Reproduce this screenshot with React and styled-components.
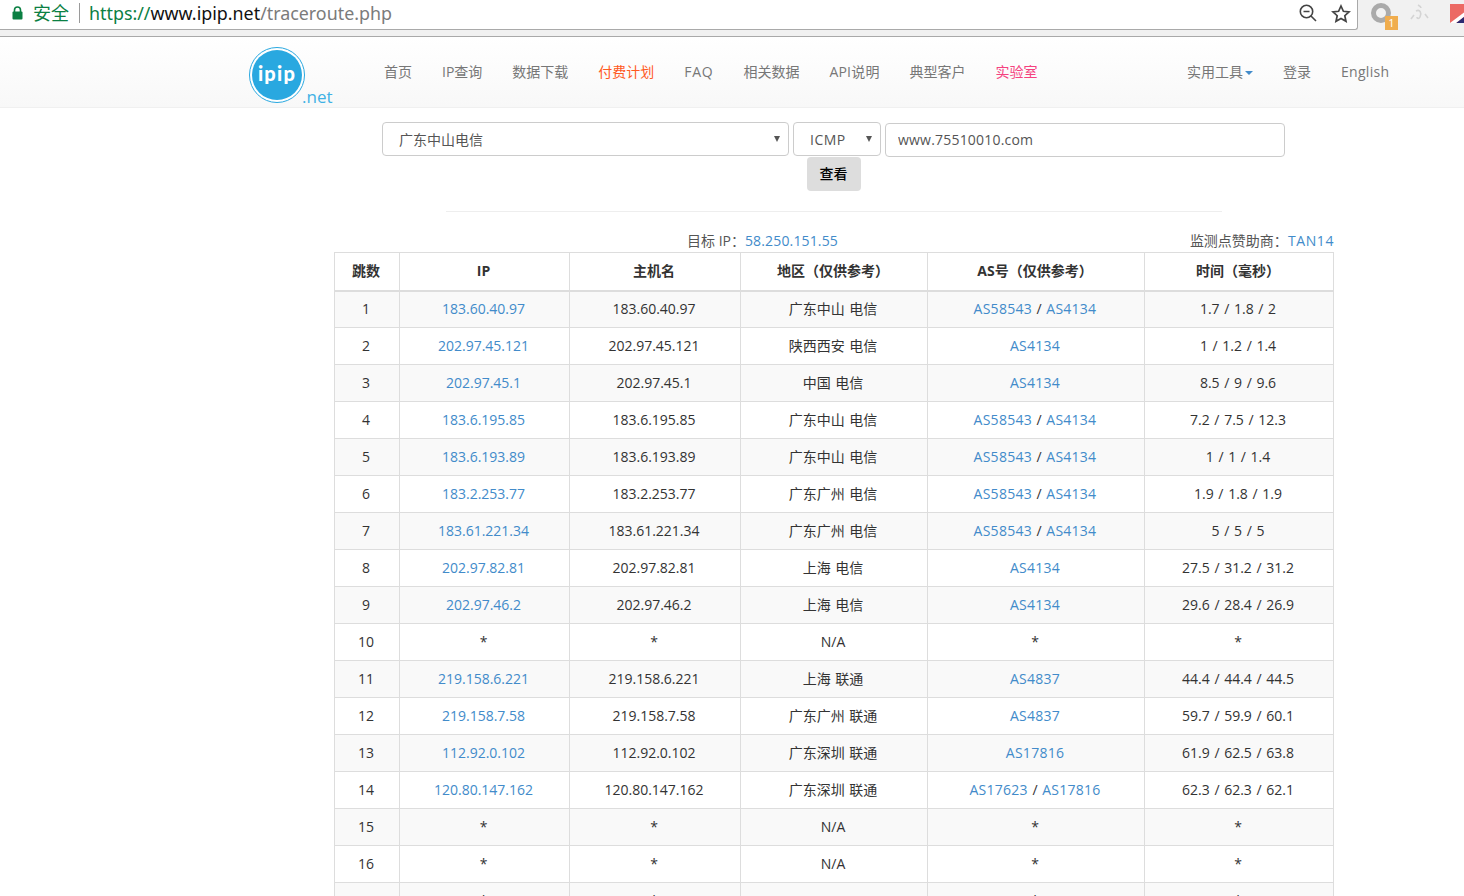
import React from "react";
import styled, { createGlobalStyle } from "styled-components";

const GlobalStyle = createGlobalStyle`
    html, body {
        margin: 0;
        padding: 0;
        height: 896px;
        overflow: hidden;
        background: #fff;
    }
    body {
        font-family: "Open Sans", "Noto Sans CJK SC", sans-serif;
        font-size: 14px;
        color: #333;
    }
`;

const Browser = styled.div`
    height: 36px;
    background: #f1f1f1;
    border-bottom: 1px solid #a9a9a9;
    display: flex;
    align-items: flex-start;
    box-sizing: content-box;
`;

const AddressBar = styled.div`
    width: 1358px;
    height: 30px;
    box-sizing: border-box;
    background: #fff;
    border-right: 1px solid #a9a9a9;
    border-bottom: 1px solid #a9a9a9;
    border-bottom-right-radius: 3px;
    display: flex;
    align-items: center;
    padding: 0 6px 3px 12px;
`;

const Secure = styled.span`
    color: #0b8043;
    font-size: 18px;
    margin-left: 10px;
    padding-right: 10px;
    border-right: 1px solid #9a9a9a;
    line-height: 20px;
`;

const Url = styled.div`
    margin-left: 9px;
    flex: 1;
    font-family: "Noto Sans", sans-serif;
    font-size: 17.85px;
    color: #7b7b7b;
    white-space: nowrap;
`;

const UrlScheme = styled.span`
    color: #0b8043;
`;

const UrlHost = styled.span`
    color: #111;
`;

const ChromeIcons = styled.div`
    display: flex;
    align-items: center;
    gap: 14px;
`;

const Extensions = styled.div`
    flex: 1;
    height: 30px;
    display: flex;
    align-items: flex-start;
    padding: 2px 0 0 12px;
    gap: 13px;
    overflow: hidden;
`;

const ExtIcon = styled.div`
    position: relative;
    width: 27px;
    height: 30px;
    flex: none;
`;

const Badge = styled.span`
    position: absolute;
    left: 15px;
    top: 14px;
    width: 13px;
    height: 14px;
    background: #f0ad4e;
    color: #fff;
    font-size: 11px;
    line-height: 14px;
    text-align: center;
`;

const Navbar = styled.nav`
    height: 71px;
    box-sizing: border-box;
    background: linear-gradient(to bottom, #fff 0%, #f8f8f8 100%);
    border-bottom: 1px solid #f0f0f0;
    display: flex;
    padding-left: 249px;
`;

const Logo = styled.a`
    width: 85px;
    height: 70px;
    flex: none;
`;

const NavList = styled.div`
    display: flex;
    align-items: center;
    margin-left: 50px;
    gap: 30px;
    height: 68px;
`;

const NavRight = styled(NavList)`
    margin-left: 0;
    position: absolute;
    left: 1187px;
`;

const NavItem = styled.a`
    color: ${(p) => p.$color || "#777"};
    font-size: 14px;
    letter-spacing: ${(p) => p.$spacing || 0}px;
    white-space: nowrap;
`;

const Caret = styled.span`
    display: inline-block;
    margin-left: 2px;
    vertical-align: middle;
    border-top: 4px solid #428bca;
    border-left: 4px solid transparent;
    border-right: 4px solid transparent;
`;

const Form = styled.form`
    display: flex;
    flex-direction: column;
    align-items: flex-start;
    padding: 14px 0 0 382px;
`;

const FieldRow = styled.div`
    display: flex;
    gap: 4px;
`;

const SelectWrap = styled.div`
    position: relative;
    width: ${(p) => p.$width}px;
    &::after {
        content: "";
        position: absolute;
        right: 9px;
        top: 14px;
        border-top: 6px solid #555;
        border-left: 3.5px solid transparent;
        border-right: 3.5px solid transparent;
    }
`;

const Select = styled.select`
    appearance: none;
    width: 100%;
    height: 34px;
    box-sizing: border-box;
    padding: 0 16px;
    background: #fff;
    border: 1px solid #ccc;
    border-radius: 4px;
    font: inherit;
    font-size: 14px;
    letter-spacing: ${(p) => p.$spacing || 0}px;
    color: #555;
`;

const Input = styled.input`
    width: 400px;
    height: 34px;
    margin-top: 1px;
    box-sizing: border-box;
    padding: 0 12px 2px;
    background: #fff;
    border: 1px solid #ccc;
    border-radius: 4px;
    font: inherit;
    font-size: 14px;
    letter-spacing: 0.2px;
    color: #555;
`;

const Submit = styled.button`
    width: 54px;
    height: 34px;
    margin: 0 0 0 425px;
    background: #ddd;
    border: 0;
    border-radius: 4px;
    font: inherit;
    font-size: 14px;
    font-weight: 500;
    color: #000;
    padding: 0 1px 3px 0;
`;

const Divider = styled.hr`
    width: 776px;
    margin: 20px 0 0 446px;
    border: 0;
    border-top: 1px solid #eee;
`;

const Content = styled.div`
    width: 1000px;
    margin: 20px 0 0 334px;
`;

const InfoRow = styled.div`
    display: flex;
    justify-content: space-between;
    height: 20px;
    padding-left: 353px;
    box-sizing: border-box;
    line-height: 18px;
    color: #555;
`;

const Link = styled.a`
    color: ${(p) => p.$color || "#428bca"};
    letter-spacing: ${(p) => p.$spacing || 0}px;
`;

const Table = styled.table`
    width: 999px;
    table-layout: fixed;
    border-collapse: collapse;
    border: 1px solid #ddd;
`;

const Th = styled.th`
    height: 38px;
    box-sizing: border-box;
    padding: 0 9px 2px 7px;
    border: 1px solid #ddd;
    border-bottom: 2px solid #ddd;
    text-align: center;
    font-size: 14px;
    font-weight: 700;
    color: #333;
`;

const Tr = styled.tr`
    background: ${(p) => (p.$odd ? "#f9f9f9" : "#fff")};
`;

const Td = styled.td`
    height: 37px;
    box-sizing: border-box;
    padding: 0 9px 2px 7px;
    border: 1px solid #ddd;
    text-align: center;
    font-size: 14px;
    word-spacing: 1px;
    color: #333;
`;

const columns = [
    { title: "跳数", width: 65 },
    { title: "IP", width: 170 },
    { title: "主机名", width: 171 },
    { title: "地区（仅供参考）", width: 187 },
    { title: "AS号（仅供参考）", width: 217 },
    { title: "时间（毫秒）", width: 189 },
];

const navItems = [
    { label: "首页" },
    { label: "IP查询" },
    { label: "数据下载" },
    { label: "付费计划", color: "#ff5a1f" },
    { label: "FAQ", spacing: 0.7 },
    { label: "相关数据" },
    { label: "API说明", spacing: 0.2 },
    { label: "典型客户" },
    { label: "实验室", color: "#f5427f" },
];

const hops = [
    ["183.60.40.97", "广东中山 电信", ["AS58543", "AS4134"], "1.7 / 1.8 / 2"],
    ["202.97.45.121", "陕西西安 电信", ["AS4134"], "1 / 1.2 / 1.4"],
    ["202.97.45.1", "中国 电信", ["AS4134"], "8.5 / 9 / 9.6"],
    ["183.6.195.85", "广东中山 电信", ["AS58543", "AS4134"], "7.2 / 7.5 / 12.3"],
    ["183.6.193.89", "广东中山 电信", ["AS58543", "AS4134"], "1 / 1 / 1.4"],
    ["183.2.253.77", "广东广州 电信", ["AS58543", "AS4134"], "1.9 / 1.8 / 1.9"],
    ["183.61.221.34", "广东广州 电信", ["AS58543", "AS4134"], "5 / 5 / 5"],
    ["202.97.82.81", "上海 电信", ["AS4134"], "27.5 / 31.2 / 31.2"],
    ["202.97.46.2", "上海 电信", ["AS4134"], "29.6 / 28.4 / 26.9"],
    null,
    ["219.158.6.221", "上海 联通", ["AS4837"], "44.4 / 44.4 / 44.5"],
    ["219.158.7.58", "广东广州 联通", ["AS4837"], "59.7 / 59.9 / 60.1"],
    ["112.92.0.102", "广东深圳 联通", ["AS17816"], "61.9 / 62.5 / 63.8"],
    ["120.80.147.162", "广东深圳 联通", ["AS17623", "AS17816"], "62.3 / 62.3 / 62.1"],
    null,
    null,
    null,
];

const App = () => {
    return (
        <>
            <GlobalStyle />
            <Browser>
                <AddressBar>
                    <svg width="11" height="14" viewBox="0 0 11 14">
                        <path d="M2.5 6V4a3 3 0 0 1 6 0v2" fill="none" stroke="#0b8043" strokeWidth="1.6" />
                        <rect x="0.5" y="5.5" width="10" height="8" rx="1" fill="#0b8043" />
                    </svg>
                    <Secure>安全</Secure>
                    <Url>
                        <UrlScheme>https://</UrlScheme>
                        <UrlHost>www.ipip.net</UrlHost>
                        /traceroute.php
                    </Url>
                    <ChromeIcons>
                        <svg width="18" height="18" viewBox="0 0 18 18" fill="none" stroke="#444" strokeWidth="1.6">
                            <circle cx="7.5" cy="7.5" r="6.2" />
                            <path d="M4.5 7.5h6M12 12l5 5" />
                        </svg>
                        <svg width="20" height="19" viewBox="0 0 20 19" fill="none" stroke="#444" strokeWidth="1.7">
                            <path d="M10 2l2.4 5.3 5.6.6-4.2 3.8 1.2 5.6-5-2.9-5 2.9 1.2-5.6L2 7.9l5.6-.6z" />
                        </svg>
                    </ChromeIcons>
                </AddressBar>
                <Extensions>
                    <ExtIcon>
                        <svg width="24" height="24" viewBox="0 0 24 24" fill="none" stroke="#aaa" strokeWidth="5">
                            <circle cx="11" cy="11" r="7.5" />
                        </svg>
                        <Badge>1</Badge>
                    </ExtIcon>
                    <ExtIcon>
                        <svg width="20" height="22" viewBox="0 0 20 22" fill="none" stroke="#d4d4d4" strokeWidth="1.6">
                            <path d="M8 3c2 1 3 2 3 3M6 9c4-2 6 2 4 6-1 2-3 2-3 0M4 13l-3 4M15 12l3 4" />
                        </svg>
                    </ExtIcon>
                    <ExtIcon>
                        <svg width="20" height="24" viewBox="0 0 20 24">
                            <rect y="2" width="20" height="19" fill="#ec6a64" />
                            <path d="M6 21L20 10v11z" fill="#2b2a72" />
                            <path d="M0 21L20 6v4L6 21z" fill="#fff" />
                        </svg>
                    </ExtIcon>
                </Extensions>
            </Browser>

            <Navbar>
                <Logo>
                    <svg width="85" height="70" viewBox="0 0 85 70">
                        <circle cx="28" cy="38" r="27.5" fill="#fff" stroke="#29a8e0" strokeWidth="1" />
                        <circle cx="28" cy="38" r="25" fill="#29a8e0" />
                        <text x="28" y="44" textAnchor="middle" fontFamily="Lato, sans-serif" fontWeight="900" fontSize="20" letterSpacing="1.2" fill="#fff">ipip</text>
                        <text x="53" y="66" fontFamily="'Open Sans', sans-serif" fontSize="17" fill="#3fb1e5">.net</text>
                    </svg>
                </Logo>
                <NavList>
                    {navItems.map((item) => (
                        <NavItem key={item.label} $color={item.color} $spacing={item.spacing}>{item.label}</NavItem>
                    ))}
                </NavList>
                <NavRight>
                    <NavItem>实用工具<Caret /></NavItem>
                    <NavItem>登录</NavItem>
                    <NavItem $spacing={0.3}>English</NavItem>
                </NavRight>
            </Navbar>

            <Form>
                <FieldRow>
                    <SelectWrap $width={407}>
                        <Select defaultValue="zs">
                            <option value="zs">广东中山电信</option>
                        </Select>
                    </SelectWrap>
                    <SelectWrap $width={88}>
                        <Select defaultValue="icmp" $spacing={0.5}>
                            <option value="icmp">ICMP</option>
                        </Select>
                    </SelectWrap>
                    <Input defaultValue="www.75510010.com" />
                </FieldRow>
                <Submit type="button">查看</Submit>
            </Form>
            <Divider />

            <Content>
                <InfoRow>
                    <div>目标 IP：<Link $spacing={0.15}>58.250.151.55</Link></div>
                    <div>监测点赞助商：<Link $spacing={0.6}>TAN14</Link></div>
                </InfoRow>
                <Table>
                    <colgroup>
                        {columns.map((c) => (
                            <col key={c.title} style={{ width: c.width }} />
                        ))}
                    </colgroup>
                    <thead>
                        <tr>
                            {columns.map((c) => (
                                <Th key={c.title}>{c.title}</Th>
                            ))}
                        </tr>
                    </thead>
                    <tbody>
                        {hops.map((hop, i) => (
                            <Tr key={i} $odd={i % 2 === 0}>
                                <Td>{i + 1}</Td>
                                <Td>{hop ? <Link>{hop[0]}</Link> : "*"}</Td>
                                <Td>{hop ? hop[0] : "*"}</Td>
                                <Td>{hop ? hop[1] : "N/A"}</Td>
                                <Td>
                                    {hop
                                        ? hop[2].map((as, j) => (
                                              <React.Fragment key={as}>
                                                  {j > 0 && " / "}
                                                  <Link $spacing={0.25}>{as}</Link>
                                              </React.Fragment>
                                          ))
                                        : "*"}
                                </Td>
                                <Td>{hop ? hop[3] : "*"}</Td>
                            </Tr>
                        ))}
                    </tbody>
                </Table>
            </Content>
        </>
    );
};

export default App;
